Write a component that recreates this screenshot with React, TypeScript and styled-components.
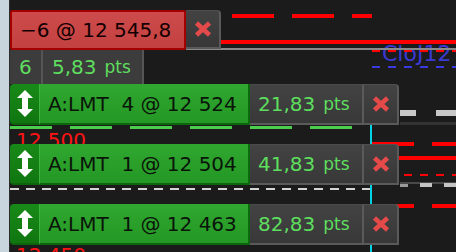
import React from "react";
import styled, { createGlobalStyle } from "styled-components";

const Global = createGlobalStyle`
  html, body { margin: 0; padding: 0; background: #1b1b1b; }
  body { width: 456px; height: 252px; overflow: hidden; font-family: "DejaVu Sans", Verdana, sans-serif; }
`;

const Screen = styled.div`
  display: flex;
  width: 456px;
  height: 252px;
  overflow: hidden;
  background: #1b1b1b;
`;

const Gutter = styled.div`
  flex: none;
  width: 9px;
  background: #c9d5dd;
  border-right: 1px solid #2c2c2c;
`;

const Chart = styled.div`
  position: relative;
  flex: 1;
  display: flex;
  flex-direction: column;
  align-items: flex-start;
  padding-top: 10px;
`;

const ChartLayer = styled.svg`
  position: absolute;
  left: 0;
  top: 0;
  width: 446px;
  height: 252px;
  z-index: 0;
`;

const Labels = styled.div`
  position: relative;
  z-index: 1;
  display: flex;
  flex-direction: column;
  align-items: flex-start;
`;

const Head = styled.div`
  display: flex;
  align-items: flex-start;
`;

const Working = styled.div`
  box-sizing: border-box;
  width: 176px;
  height: 40px;
  display: flex;
  align-items: center;
  padding-left: 8px;
  background: linear-gradient(#cf4b4b, #c24141);
  border: 2px solid #a30000;
  border-radius: 2px;
  color: #140000;
  font-size: 20px;
  white-space: pre;
`;

const CloseBtn = styled.div<{ $h: number }>`
  box-sizing: border-box;
  width: 35px;
  height: ${(p) => p.$h}px;
  display: flex;
  align-items: center;
  justify-content: center;
  background: linear-gradient(#434343, #373737);
  border-top: 1px solid #4e4e4e;
  border-right: 2px solid #5a5a5a;
  border-bottom: 2px solid #5a5a5a;
  border-top-right-radius: 4px;
`;

const Stats = styled.div`
  display: flex;
  height: 34px;
`;

const StatCell = styled.div<{ $w: number; $pad: number }>`
  box-sizing: border-box;
  width: ${(p) => p.$w}px;
  display: flex;
  align-items: center;
  padding-left: ${(p) => p.$pad}px;
  background: #3c3c3c;
  border-right: 2px solid #555555;
  color: #5ede5e;
  font-size: 20px;
  white-space: pre;
`;

const Unit = styled.span`
  font-size: 17px;
  margin-left: 8px;
`;

const Rows = styled.div`
  display: flex;
  flex-direction: column;
  gap: 19px;
`;

const Row = styled.div`
  display: flex;
  height: 41px;
`;

const Handle = styled.div`
  box-sizing: border-box;
  width: 30px;
  display: flex;
  align-items: center;
  justify-content: center;
  background: linear-gradient(#188a18, #107610);
  border-radius: 4px 0 0 4px;
  border-right: 1px solid #3db43d;
  border-bottom: 2px solid #0c640c;
`;

const OrderText = styled.div`
  box-sizing: border-box;
  width: 210px;
  display: flex;
  align-items: center;
  padding-left: 8px;
  background: linear-gradient(#30a830, #249724);
  border-right: 2px solid #0d6a0d;
  border-bottom: 2px solid #0d660d;
  color: #0a150a;
  font-size: 20px;
  white-space: pre;
`;

const Pts = styled.div`
  box-sizing: border-box;
  width: 114px;
  display: flex;
  align-items: center;
  padding-left: 8px;
  background: linear-gradient(#434343, #383838);
  border-top: 1px solid #4a4a4a;
  border-right: 2px solid #5a5a5a;
  border-bottom: 2px solid #5a5a5a;
  color: #5ede5e;
  font-size: 20px;
  white-space: pre;
`;

const XIcon = () => (
  <svg width="18" height="16" viewBox="0 0 18 16">
    <path d="M2.5 2 L15.5 14 M15.5 2 L2.5 14" stroke="#e44a4a" strokeWidth="4.5" fill="none" />
  </svg>
);

const UpDown = () => (
  <svg width="16" height="27" viewBox="0 0 16 27">
    <path d="M8 0 L16 8 L11 8 L11 19 L16 19 L8 27 L0 19 L5 19 L5 8 L0 8 Z" fill="#ffffff" />
  </svg>
);

const orders = [
  { qty: 4, price: "12 524", pts: "21,83" },
  { qty: 1, price: "12 504", pts: "41,83" },
  { qty: 1, price: "12 463", pts: "82,83" },
];

const range = (start: number, end: number, step: number) => {
  const out: number[] = [];
  for (let x = start; x < end; x += step) out.push(x);
  return out;
};

const ChartDrawing = () => (
  <ChartLayer viewBox="0 0 446 252">
    <g transform="translate(-10 0)" fontFamily="'DejaVu Sans', Verdana, sans-serif">
      <text x="382" y="61" fontSize="22" fill="#3a3ad2">CloJ12</text>
      <text x="16" y="147" fontSize="20" fill="#ff1414">12 500</text>
      <text x="16" y="262" fontSize="20" fill="#ff1414">12 450</text>
      <g fill="#ff0000">
        <rect x="232" y="14" width="42" height="4" />
        <rect x="292" y="14" width="42" height="4" />
        <rect x="352" y="14" width="20" height="4" />
        <rect x="221" y="40" width="235" height="4" />
        {range(372, 456, 16).map((x) => (
          <rect key={"a" + x} x={x} y="50" width="8" height="2" />
        ))}
        <rect x="372" y="142" width="42" height="4" />
        <rect x="432" y="142" width="24" height="4" />
        <rect x="372" y="156" width="84" height="4" />
        {range(372, 456, 16).map((x) => (
          <rect key={"b" + x} x={x} y="174" width="8" height="2" />
        ))}
        <rect x="372" y="204" width="42" height="4" />
        <rect x="432" y="204" width="24" height="4" />
      </g>
      <rect x="186" y="48" width="270" height="2" fill="#8a8a8a" />
      {range(372, 456, 16).map((x) => (
        <rect key={"c" + x} x={x} y="66" width="8" height="2" fill="#3a3ae2" />
      ))}
      {range(10, 360, 60).map((x) => (
        <rect key={"d" + x} x={x} y="126" width="42" height="3" fill="#4ccd4c" />
      ))}
      <rect x="400" y="110" width="16" height="6" fill="#c8c8c8" />
      <rect x="436" y="110" width="20" height="6" fill="#c8c8c8" />
      <rect x="400" y="122" width="56" height="3" fill="#333333" />
      {range(10, 370, 16).map((x) => (
        <rect key={"e" + x} x={x} y="188" width="9" height="2" fill="#d4d4d4" />
      ))}
      <rect x="400" y="182" width="56" height="2" fill="#4a4a4a" />
      <rect x="400" y="184" width="8" height="3" fill="#9a9a9a" />
      <rect x="420" y="183" width="12" height="4" fill="#c4c4c4" />
      <rect x="444" y="183" width="12" height="4" fill="#c4c4c4" />
      <rect x="370" y="125" width="2" height="127" fill="#00d4e4" />
    </g>
  </ChartLayer>
);

export default function App() {
  return (
    <>
      <Global />
      <Screen>
        <Gutter />
        <Chart>
          <ChartDrawing />
          <Labels>
            <Head>
              <Working>{"−6 @ 12 545,8"}</Working>
              <CloseBtn $h={39}>
                <XIcon />
              </CloseBtn>
            </Head>
            <Stats>
              <StatCell $w={33} $pad={9}>6</StatCell>
              <StatCell $w={101} $pad={9}>
                5,83<Unit>pts</Unit>
              </StatCell>
            </Stats>
            <Rows>
              {orders.map((o, i) => (
                <Row key={i}>
                  <Handle>
                    <UpDown />
                  </Handle>
                  <OrderText>{`A:LMT  ${o.qty} @ ${o.price}`}</OrderText>
                  <Pts>
                    {o.pts}
                    <Unit>pts</Unit>
                  </Pts>
                  <CloseBtn $h={41}>
                    <XIcon />
                  </CloseBtn>
                </Row>
              ))}
            </Rows>
          </Labels>
        </Chart>
      </Screen>
    </>
  );
}
